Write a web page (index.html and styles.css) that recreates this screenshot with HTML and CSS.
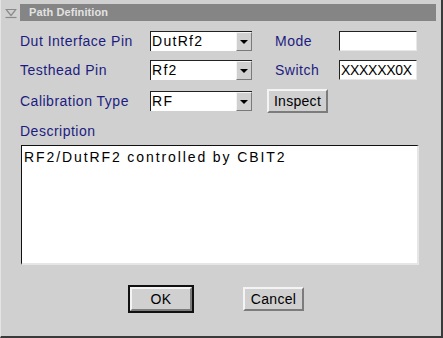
FILE: index.html
```html
<!DOCTYPE html>
<html lang="en">
	<head>
		<title>Path Definition</title>
		<meta charset="utf-8">
		<link rel="stylesheet" href="styles.css">
	</head>
	<body>
		<div class="window">

			<div class="titlerow">
				<div class="wicon">
					<svg width="12" height="11" viewBox="0 0 12 11">
						<path d="M0.5 1.5 H11.5 M1.5 2 L6 7.5 L10.5 2" fill="none" stroke="#8a8a8a" stroke-width="1.2"/>
						<path d="M0.5 9.5 H11.5" stroke="#8a8a8a" stroke-width="1.2"/>
					</svg>
				</div>
				<div class="titlebar">Path Definition</div>
			</div>

			<div class="form">
				<label class="lbl">Dut Interface Pin</label>
				<div class="combo"><span class="ctext">DutRf2</span><span class="cbtn"><i class="arrow"></i></span></div>
				<span></span>
				<label class="lbl lbl-r">Mode</label>
				<div class="field"></div>

				<label class="lbl">Testhead Pin</label>
				<div class="combo"><span class="ctext">Rf2</span><span class="cbtn"><i class="arrow"></i></span></div>
				<span></span>
				<label class="lbl lbl-r">Switch</label>
				<div class="field">XXXXXX0X</div>

				<label class="lbl">Calibration Type</label>
				<div class="combo"><span class="ctext">RF</span><span class="cbtn"><i class="arrow"></i></span></div>
				<span></span>
				<button class="btn btn-inspect">Inspect</button>
				<span></span>
			</div>

			<div class="desc">
				<label class="lbl">Description</label>
				<div class="textarea">RF2/DutRF2 controlled by CBIT2</div>
			</div>

			<div class="actions">
				<div class="default"><button class="btn btn-ok">OK</button></div>
				<button class="btn btn-cancel">Cancel</button>
			</div>

		</div>
	</body>
</html>
```

FILE: styles.css
```css
/*
 * RESET
 */
* { margin: 0; padding: 0; box-sizing: border-box; }
html, body { width: 443px; height: 338px; overflow: hidden; }
body { background: #d0d0d0; font-family: "Liberation Sans", Arial, sans-serif; font-size: 14px; }
button { font-family: inherit; font-size: 14px; color: #000; }

/*
 * WINDOW
 */
.window {
	width: 443px; height: 338px;
	background: #d0d0d0;
	border-right: 2px solid #3a3a3a;
	border-bottom: 2px solid #3a3a3a;
	border-left: 1px solid #e4e4e4;
}

.titlerow { display: flex; align-items: center; height: 21px; padding-top: 3px; }
.wicon { width: 19px; display: flex; justify-content: center; padding-top: 2px; }
.titlebar {
	width: 416px; height: 17px;
	background: #858585;
	color: #e2e2e2;
	font-weight: bold; font-size: 11px;
	line-height: 17px;
	padding-left: 9px;
	letter-spacing: 0.1px;
}

/*
 * FORM
 */
.form {
	display: grid;
	grid-template-columns: 130px 102px 15px 72px 78px;
	grid-template-rows: 20px 20px 24px;
	row-gap: 9px;
	align-items: center;
	margin-top: 10px;
	padding-left: 19px;
}

.lbl { color: #1c1c80; font-size: 14px; line-height: 16px; letter-spacing: 0.5px; }
.lbl-r { padding-left: 8px; }

.combo { display: flex; height: 20px; background: #fff; border-top: 1px solid #222; border-left: 1px solid #222; }
.ctext { flex: 1; padding-left: 1px; line-height: 18px; font-size: 14px; color: #000; letter-spacing: 1.3px; }
.cbtn {
	width: 16px; height: 19px;
	background: #d0d0d0;
	border-top: 1px solid #f4f4f4; border-left: 1px solid #f4f4f4;
	border-right: 1px solid #7a7a7a; border-bottom: 1px solid #7a7a7a;
	display: flex; flex-direction: column; align-items: center; justify-content: center;
}
.arrow {
	width: 0; height: 0;
	border-left: 4px solid transparent; border-right: 4px solid transparent;
	border-top: 4px solid #000;
	margin-top: 1px;
}

.field {
	height: 20px;
	background: #fff;
	border-top: 1px solid #222; border-left: 1px solid #222;
	border-right: 1px solid #e8e8e8; border-bottom: 1px solid #e8e8e8;
	font-size: 14px; line-height: 18px; padding-left: 1px;
	letter-spacing: -0.3px;
	overflow: hidden; white-space: nowrap;
}

.btn {
	background: #d0d0d0;
	border-top: 2px solid #f4f4f4; border-left: 2px solid #f4f4f4;
	border-right: 2px solid #7c7c7c; border-bottom: 2px solid #7c7c7c;
	letter-spacing: 0.3px;
}
.btn-inspect { width: 61px; height: 24px; justify-self: start; }

/*
 * DESCRIPTION
 */
.desc { padding-left: 19px; margin-top: 10px; }
.desc .lbl { display: block; height: 16px; }
.textarea {
	width: 398px; height: 120px;
	margin-top: 6px; margin-left: 1px;
	background: #fff;
	border-top: 1px solid #111; border-left: 1px solid #111;
	border-right: 2px solid #e6e6e6; border-bottom: 2px solid #e6e6e6;
	padding: 3px 2px;
	font-size: 14px; line-height: 17px;
	letter-spacing: 1.9px;
}

/*
 * ACTIONS
 */
.actions { display: flex; align-items: center; gap: 49px; margin-top: 20px; padding-left: 127px; }
.default { border: 2px solid #111; }
.btn-ok { width: 62px; height: 24px; display: block; }
.btn-cancel { width: 61px; height: 24px; }
```
